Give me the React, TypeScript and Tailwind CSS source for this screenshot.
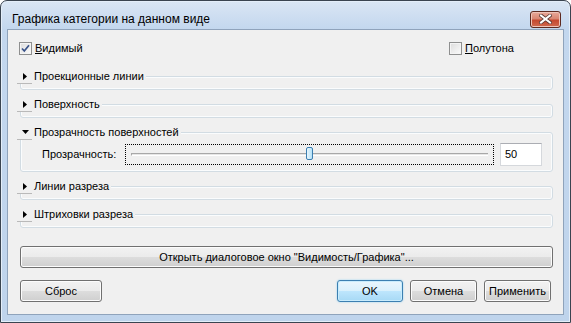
import { type ReactNode } from 'react'

const btn =
  'flex h-[22px] items-center justify-center rounded-[3px] border border-[#707070] bg-[linear-gradient(#f2f2f2_0%,#ebebeb_50%,#dddddd_50%,#cfcfcf_100%)] shadow-[inset_0_0_0_1px_#fcfcfc] text-black'

function Checkbox({ checked, label }: { checked?: boolean; label: ReactNode }) {
  return (
    <div className="flex items-center gap-[2px]">
      <span className="flex h-[13px] w-[13px] items-center justify-center border border-[#8e8f8f] bg-[linear-gradient(135deg,#dcdcdc,#fbfbfb)] shadow-[inset_0_0_0_1px_#f4f4f4]">
        {checked && (
          <svg width="11" height="11" viewBox="0 0 11 11">
            <path d="M2 5.5 L4.3 8 L9 2.2" fill="none" stroke="#3a5389" strokeWidth="1.7" />
          </svg>
        )}
      </span>
      <span className="ml-[1px]">{label}</span>
    </div>
  )
}

function Arrow({ open }: { open?: boolean }) {
  return open ? (
    <svg width="7" height="4" viewBox="0 0 7 4">
      <path d="M0 0 H7 L3.5 4 Z" fill="#000" />
    </svg>
  ) : (
    <svg width="4" height="7" viewBox="0 0 4 7">
      <path d="M0 0 V7 L4 3.5 Z" fill="#000" />
    </svg>
  )
}

function Section({ title, open, children }: { title: string; open?: boolean; children?: ReactNode }) {
  return (
    <div className={`relative rounded-[3px] border border-[#d2dce3] shadow-[inset_0_0_0_1px_#fafcfd] ${open ? 'h-[40px]' : 'h-[14px]'}`}>
      <div className="absolute -left-[4px] -top-[8px] flex h-[15px] items-center bg-[#f0f0f0] pr-[2px]">
        <span className="flex h-[15px] w-[15px] items-center justify-center border-b border-[#b9b9b9] pl-[1px]">
          <Arrow open={open} />
        </span>
        <span className="ml-[2px]">{title}</span>
      </div>
      {children}
    </div>
  )
}

export default function App() {
  const value = 50

  return (
    <div className="h-[323px] w-[571px] overflow-hidden rounded-t-[7px] border border-[#3a4450] bg-[linear-gradient(#dae6f4_0%,#c3d7ee_28px,#bfd4ec_100%)] font-['Liberation_Sans',Arial,sans-serif] text-[11px] text-black shadow-[inset_0_0_0_1px_#e4eef9]">
      {/* Title bar */}
      <div className="flex h-[28px] items-center pl-[11px] pr-[9px] pt-[8px]">
        <span className="text-[12px] text-black">Графика категории на данном виде</span>
        <button className="ml-auto flex h-[17px] w-[31px] items-center justify-center rounded-[3px] border border-[#5e2a20] bg-[linear-gradient(#e9a99a_0%,#d98672_45%,#c5482f_55%,#d06a4f_100%)] shadow-[inset_0_0_0_1px_#eec3b8]">
          <svg width="13" height="10" viewBox="0 0 13 10">
            <path d="M2 1.5 L11 8.5 M11 1.5 L2 8.5" stroke="#5a3a36" strokeWidth="3.6" strokeLinecap="square" />
            <path d="M2 1.5 L11 8.5 M11 1.5 L2 8.5" stroke="#ffffff" strokeWidth="2" strokeLinecap="square" />
          </svg>
        </button>
      </div>

      {/* Client area */}
      <div className="mx-[6px] h-[286px] border border-[#8fa3bb] bg-[#f0f0f0]">
        {/* Checkboxes */}
        <div className="mt-[12px] flex h-[13px] items-center pl-[11px]">
          <div className="w-[430px]">
            <Checkbox checked label={<><span className="underline">В</span>идимый</>} />
          </div>
          <Checkbox label={<><span className="underline">П</span>олутона</>} />
        </div>

        {/* Sections */}
        <div className="ml-[12px] mr-[10px] mt-[21px] flex flex-col gap-[14px]">
          <Section title="Проекционные линии" />
          <Section title="Поверхность" />
          <Section title="Прозрачность поверхностей" open>
            <div className="mt-[10px] flex h-[23px] items-center pl-[21px]">
              <span className="w-[83px]">Прозрачность:</span>
              <div className="relative flex h-[21px] w-[369px] items-center border border-dotted border-black px-[5px]">
                <div className="h-[3px] w-full border-b border-l border-t border-[#a8a8a8] border-b-[#ffffff] bg-[#e6e6e6]" />
                <div
                  className="absolute top-[2px] h-[13px] w-[7px] rounded-[2px] border border-[#3c7fb1] bg-[linear-gradient(90deg,#e8f6fd,#b6e2f8)]"
                  style={{ left: 5 + (value / 100) * 350 }}
                />
              </div>
              <div className="ml-[6px] flex h-[23px] w-[42px] items-center border border-[#d5d8dc] border-t-[#abadb3] bg-white pl-[4px]">
                50
              </div>
            </div>
          </Section>
          <Section title="Линии разреза" />
          <Section title="Штриховки разреза" />
        </div>

        {/* Open dialog button */}
        <div className={`${btn} ml-[12px] mr-[10px] mt-[18px]`}>
          Открыть диалоговое окно "Видимость/Графика"...
        </div>

        {/* Bottom buttons */}
        <div className="mt-[12px] flex items-center pl-[12px] pr-[12px]">
          <div className={`${btn} w-[82px]`}>Сброс</div>
          <div className="ml-auto flex gap-[7px]">
            <div className="flex h-[22px] w-[66px] items-center justify-center rounded-[3px] border border-[#3c7fb1] bg-[linear-gradient(#eaf6fd_0%,#d9f0fc_50%,#bee6fd_50%,#a7d9f5_100%)] shadow-[inset_0_0_0_1px_#c9ecfd,0_0_2px_#8fd0f3]">
              OK
            </div>
            <div className={`${btn} w-[67px]`}>Отмена</div>
            <div className={`${btn} w-[67px]`}>Применить</div>
          </div>
        </div>
      </div>
    </div>
  )
}
